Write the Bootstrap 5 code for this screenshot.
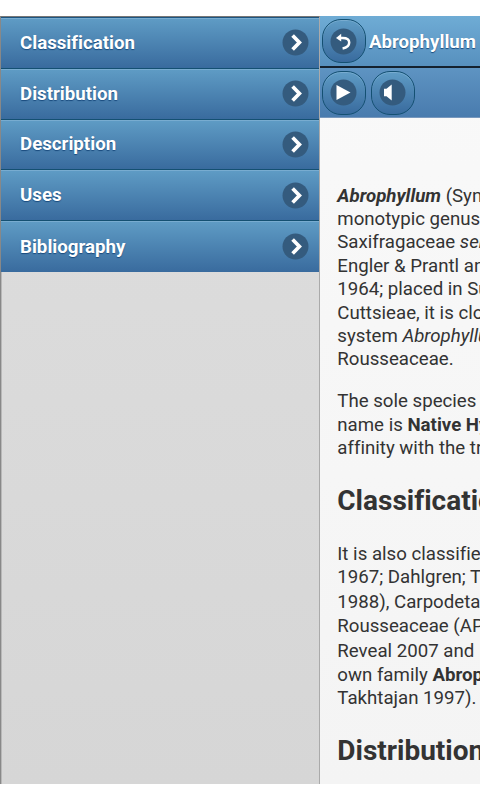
<!DOCTYPE html>
<html lang="en">
<head>
<meta charset="utf-8">
<meta name="viewport" content="width=device-width, initial-scale=1">
<title>Abrophyllum</title>
<link href="https://cdn.jsdelivr.net/npm/bootstrap@5.3.0/dist/css/bootstrap.min.css" rel="stylesheet">
<style>
body{font-family:Roboto,"Liberation Sans",sans-serif;font-variant-ligatures:none;background:#fff;color:#333;height:800px}
.screen{height:768px;margin-top:16px}
.side{width:320px;background:linear-gradient(#dedede,#d6d6d6);border-left:1px solid #888;border-right:1px solid #aaa;border-top:1px solid #777;box-shadow:inset 1px 0 #b8b8b8}
.side .list-group{border-top:1px solid #1d5580}
.side .list-group-item{height:50.8px;padding:0 10.5px 0 19px;border:0;border-bottom:1.4px solid #145072;background:linear-gradient(#5f9cc5,#396b9e);box-shadow:inset 0 1px #78acd0;color:#fff;font-weight:700;font-size:18.7px;line-height:24px;text-shadow:0 1px 1px #194b7e}
.page{background:linear-gradient(#f9f9f9,#f4f4f4)}
.top{height:52px;background:linear-gradient(#6facd5,#5790be);border-bottom:2px solid #14212e;padding-left:2px;color:#fff;font-weight:700;font-size:18.67px;text-shadow:0 1px 1px #194b7e}
.title-text{margin-left:3px;padding-top:2px}
.tools{height:50px;background:linear-gradient(#5e94c2,#497bae);border-bottom:1px solid #7898bd;padding-left:2px;gap:5px}
.round{width:44px;height:44px;padding:0 1px 0 0;border:1.5px solid #145072;border-radius:19px;background:linear-gradient(#5f9cc5,#396b9e);box-shadow:inset 0 1px #78acd0}
.article{padding:66.5px 0 0 17.3px;font-size:18.67px;line-height:23.4px}
.article p{margin:0 0 18.7px}
.article h2{font-size:28px;line-height:35px;font-weight:700;margin:22px 0 25px}
.cite{display:inline-block;height:25.6px;line-height:27.8px;vertical-align:top}
</style>
</head>
<body>
<div class="screen d-flex overflow-hidden">
<nav class="side flex-shrink-0">
<div class="list-group list-group-flush rounded-0">
<a href="#" class="list-group-item d-flex align-items-center justify-content-between">Classification<svg width="27" height="27" viewBox="0 0 27 27"><circle cx="13.5" cy="13.5" r="13" fill="#345b7e"/><path d="M10.6 6.5l6.8 7-6.8 7" fill="none" stroke="#fff" stroke-width="3.7"/></svg></a>
<a href="#" class="list-group-item d-flex align-items-center justify-content-between">Distribution<svg width="27" height="27" viewBox="0 0 27 27"><circle cx="13.5" cy="13.5" r="13" fill="#345b7e"/><path d="M10.6 6.5l6.8 7-6.8 7" fill="none" stroke="#fff" stroke-width="3.7"/></svg></a>
<a href="#" class="list-group-item d-flex align-items-center justify-content-between">Description<svg width="27" height="27" viewBox="0 0 27 27"><circle cx="13.5" cy="13.5" r="13" fill="#345b7e"/><path d="M10.6 6.5l6.8 7-6.8 7" fill="none" stroke="#fff" stroke-width="3.7"/></svg></a>
<a href="#" class="list-group-item d-flex align-items-center justify-content-between">Uses<svg width="27" height="27" viewBox="0 0 27 27"><circle cx="13.5" cy="13.5" r="13" fill="#345b7e"/><path d="M10.6 6.5l6.8 7-6.8 7" fill="none" stroke="#fff" stroke-width="3.7"/></svg></a>
<a href="#" class="list-group-item d-flex align-items-center justify-content-between">Bibliography<svg width="27" height="27" viewBox="0 0 27 27"><circle cx="13.5" cy="13.5" r="13" fill="#345b7e"/><path d="M10.6 6.5l6.8 7-6.8 7" fill="none" stroke="#fff" stroke-width="3.7"/></svg></a>
</div>
</nav>
<main class="page flex-grow-1 overflow-hidden text-nowrap">
<header class="top d-flex align-items-center">
<button class="round d-flex align-items-center justify-content-center flex-shrink-0" aria-label="Back"><svg width="27" height="27" viewBox="0 0 27 27"><circle cx="13.5" cy="13.5" r="13" fill="#345b7e"/><path d="M11.2 5.8v7.8L6 9.9z" fill="#fff"/><path d="M10 9.9h2.6c4.2 0 6.6 1.7 6.6 4.5 0 3.1-2.6 5.3-6.6 6" fill="none" stroke="#fff" stroke-width="2.5"/></svg></button>
<span class="title-text">Abrophyllum</span>
</header>
<div class="tools d-flex align-items-center">
<button class="round d-flex align-items-center justify-content-center flex-shrink-0" aria-label="Play"><svg width="27" height="27" viewBox="0 0 27 27"><circle cx="13.5" cy="13.5" r="13" fill="#345b7e"/><path d="M6.5 6l14 7.5-14 7.5z" fill="#fff"/></svg></button>
<button class="round d-flex align-items-center justify-content-center flex-shrink-0" aria-label="Volume"><svg width="27" height="27" viewBox="0 0 27 27"><circle cx="13.5" cy="13.5" r="13" fill="#345b7e"/><path d="M5 9.7h2.5L12.7 5.5v16L7.5 17.3H5z" fill="#fff"/></svg></button>
</div>
<article class="article">
<p><b><i>Abrophyllum</i></b> (Synonym<br>monotypic genus of<br>Saxifragaceae <i>sensu</i><br>Engler &amp; Prantl and<br>1964; placed in Subfamily<br>Cuttsieae, it is closely<br>system <i>Abrophyllum</i><br>Rousseaceae.</p>
<p>The sole species is<br>name is <b>Native Hydrangea</b><br>affinity with the true</p>
<h2>Classification</h2>
<p>It is also classified<br>1967; Dahlgren; Thorne<br><span class="cite">1988), Carpodetaceae</span><br>Rousseaceae (APG<br><span class="cite">Reveal 2007 and</span><br>own family <b>Abrophyllaceae</b><br>Takhtajan 1997).</p>
<h2>Distribution</h2>
</article>
</main>
</div>
<script src="https://cdn.jsdelivr.net/npm/bootstrap@5.3.0/dist/js/bootstrap.bundle.min.js"></script>
</body>
</html>
